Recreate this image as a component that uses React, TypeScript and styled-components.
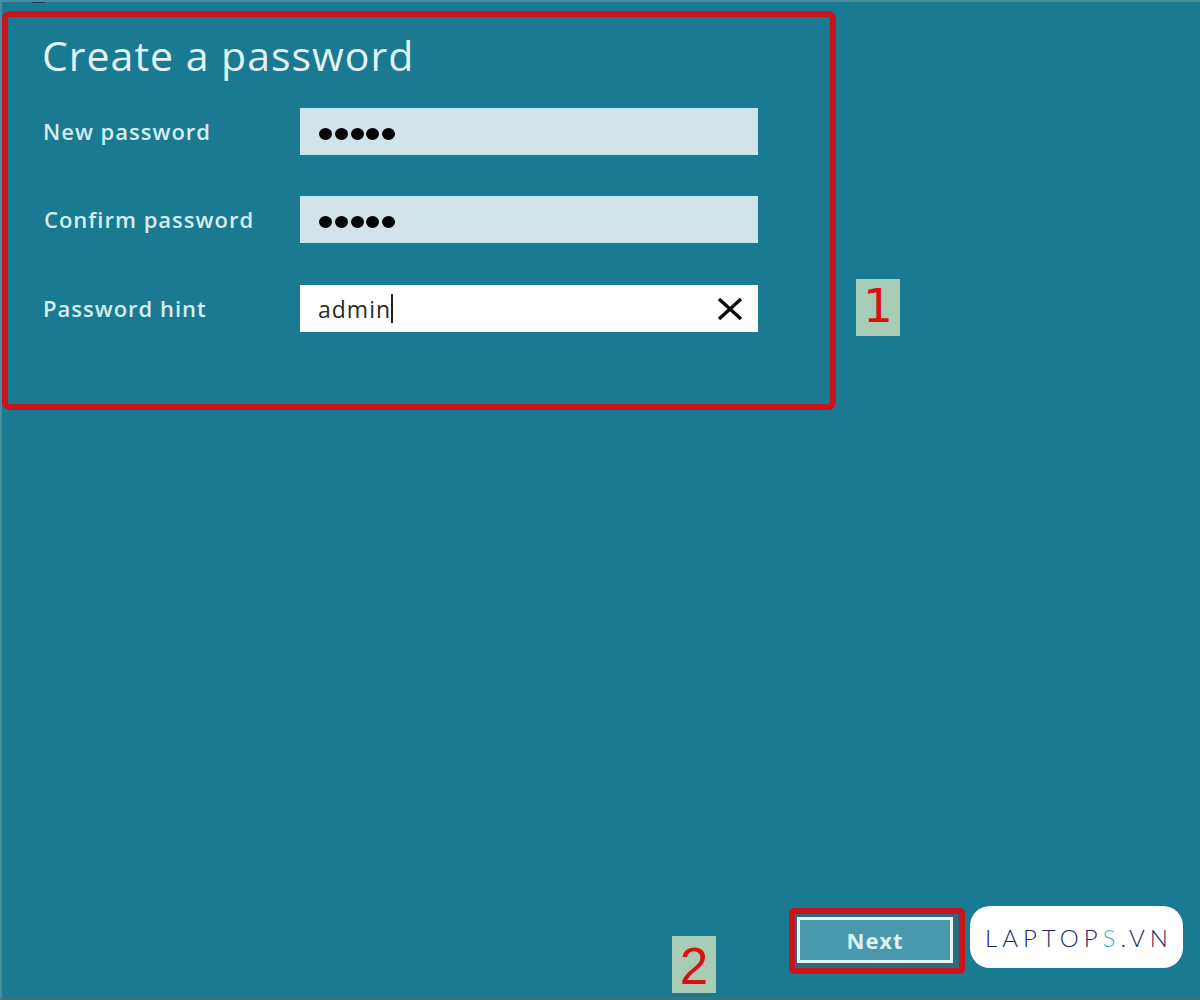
import React from "react";
import styled, { createGlobalStyle } from "styled-components";

const Global = createGlobalStyle`
  html, body { margin: 0; padding: 0; background: #197a92; }
  * { box-sizing: border-box; }
`;

const Screen = styled.div`
  position: relative;
  width: 1200px;
  height: 1000px;
  background: #197a92;
  border-left: 2px solid #4d8b9c;
  border-top: 2px solid #4d8b9c;
  border-bottom: 3px solid #3f6f7e;
  padding-top: 9px;
  display: flex;
  flex-direction: column;
  font-family: "Open Sans", "Noto Sans", sans-serif;
  overflow: hidden;
`;

const TopSpeck = styled.span`
  position: absolute;
  top: -2px;
  left: 30px;
  width: 13px;
  height: 3px;
  background: #123f52;
`;

const TopArea = styled.div`
  display: flex;
  align-items: flex-start;
  gap: 20px;
`;

const Callout = styled.section`
  width: 834px;
  height: 399px;
  border: 6px solid #c9141c;
  border-radius: 8px;
  padding: 11px 0 0 35px;
  display: flex;
  flex-direction: column;
`;

const Title = styled.h1`
  margin: 0 0 25px -1px;
  font-size: 41px;
  line-height: 55px;
  font-weight: 400;
  letter-spacing: 1px;
  color: #e2f3f5;
  font-family: "Open Sans", sans-serif;
`;

const Rows = styled.div`
  display: flex;
  flex-direction: column;
  gap: 41px;
`;

const Row = styled.div`
  display: flex;
  align-items: center;
  height: 47px;
  &:last-child {
    margin-top: 1px;
  }
`;

const Label = styled.label<{ $shift?: number }>`
  width: 257px;
  height: 47px;
  padding-left: ${(p) => p.$shift ?? 0}px;
  font-size: 22px;
  line-height: 47px;
  font-weight: 600;
  letter-spacing: 1px;
  color: #d6edf0;
`;

const Field = styled.div<{ $active?: boolean }>`
  width: 458px;
  height: 47px;
  padding: 0 14px 0 19px;
  display: flex;
  align-items: center;
  justify-content: space-between;
  background: ${(p) => (p.$active ? "#ffffff" : "#d2e4ea")};
  border-top: 1px solid ${(p) => (p.$active ? "#ffffff" : "#b6eaf2")};
  border-bottom: 1px solid ${(p) => (p.$active ? "#ffffff" : "#b6eaf2")};
  border-right: 1px solid ${(p) => (p.$active ? "#ffffff" : "#b6eaf2")};
`;

const Dots = styled.div`
  display: flex;
  gap: 2.75px;
  margin-top: 5px;
`;

const Dot = styled.span`
  width: 13px;
  height: 12px;
  border-radius: 50%;
  background: #050505;
`;

const HintText = styled.span`
  display: inline-flex;
  align-items: center;
  margin-left: -1px;
  font-size: 23px;
  color: #2a2a2a;
  letter-spacing: 1px;
`;

const Caret = styled.span`
  display: inline-block;
  width: 2px;
  height: 29px;
  background: #222;
`;

const ClearIcon = styled.svg`
  width: 26px;
  height: 24px;
  flex: none;
`;

const StepBadge = styled.div`
  width: 44px;
  height: 57px;
  background: #a8ccb6;
  color: #d8120f;
  font-family: "DejaVu Sans", sans-serif;
  font-size: 47px;
  line-height: 53px;
  text-align: center;
`;

const FirstBadge = styled(StepBadge)`
  margin-top: 268px;
`;

const Footer = styled.footer`
  margin-top: auto;
  height: 89px;
  padding-left: 670px;
  display: flex;
  align-items: flex-start;
`;

const SecondBadge = styled(StepBadge)`
  margin-top: 28px;
  font-family: "Liberation Sans", sans-serif;
  font-size: 51px;
  line-height: 62px;
`;

const NextFrame = styled.div`
  width: 176px;
  height: 66px;
  margin: 0 5px 0 73px;
  padding: 3px 6px 5px 2px;
  border: 6px solid #c9141c;
  border-radius: 5px;
  background: #33697c;
`;

const NextButton = styled.button`
  display: block;
  width: 100%;
  height: 100%;
  padding: 0;
  border: 3px solid #e6f7f8;
  background: #4a98ae;
  color: #dcf1f3;
  font-family: "Open Sans", sans-serif;
  font-size: 22px;
  font-weight: 700;
  letter-spacing: 0.9px;
`;

const LogoCard = styled.div`
  width: 213px;
  height: 62px;
  margin-top: -2px;
  background: #ffffff;
  border-radius: 20px;
  display: flex;
  align-items: center;
  justify-content: center;
`;

const LogoText = styled.span`
  font-family: "Lato", "Liberation Sans", sans-serif;
  font-size: 24px;
  font-weight: 300;
  letter-spacing: 5px;
  margin-right: -5px;
  color: #202a66;
`;

const LogoAccent = styled.span`
  color: #35b4cf;
`;

const Dotted = () => (
  <Dots>
    {[0, 1, 2, 3, 4].map((i) => (
      <Dot key={i} />
    ))}
  </Dots>
);

export default function App() {
  return (
    <>
      <Global />
      <Screen>
        <TopSpeck />
        <TopArea>
          <Callout>
            <Title>Create a password</Title>
            <Rows>
              <Row>
                <Label>New password</Label>
                <Field>
                  <Dotted />
                </Field>
              </Row>
              <Row>
                <Label $shift={1}>Confirm password</Label>
                <Field>
                  <Dotted />
                </Field>
              </Row>
              <Row>
                <Label>Password hint</Label>
                <Field $active>
                  <HintText>
                    admin
                    <Caret />
                  </HintText>
                  <ClearIcon viewBox="0 0 26 24" aria-hidden="true">
                    <path d="M2 2 L24 22 M24 2 L2 22" stroke="#0a0a0a" strokeWidth="3.4" fill="none" />
                  </ClearIcon>
                </Field>
              </Row>
            </Rows>
          </Callout>
          <FirstBadge>1</FirstBadge>
        </TopArea>
        <Footer>
          <SecondBadge>2</SecondBadge>
          <NextFrame>
            <NextButton>Next</NextButton>
          </NextFrame>
          <LogoCard>
            <LogoText>
              LAPTOP<LogoAccent>S</LogoAccent>.VN
            </LogoText>
          </LogoCard>
        </Footer>
      </Screen>
    </>
  );
}
